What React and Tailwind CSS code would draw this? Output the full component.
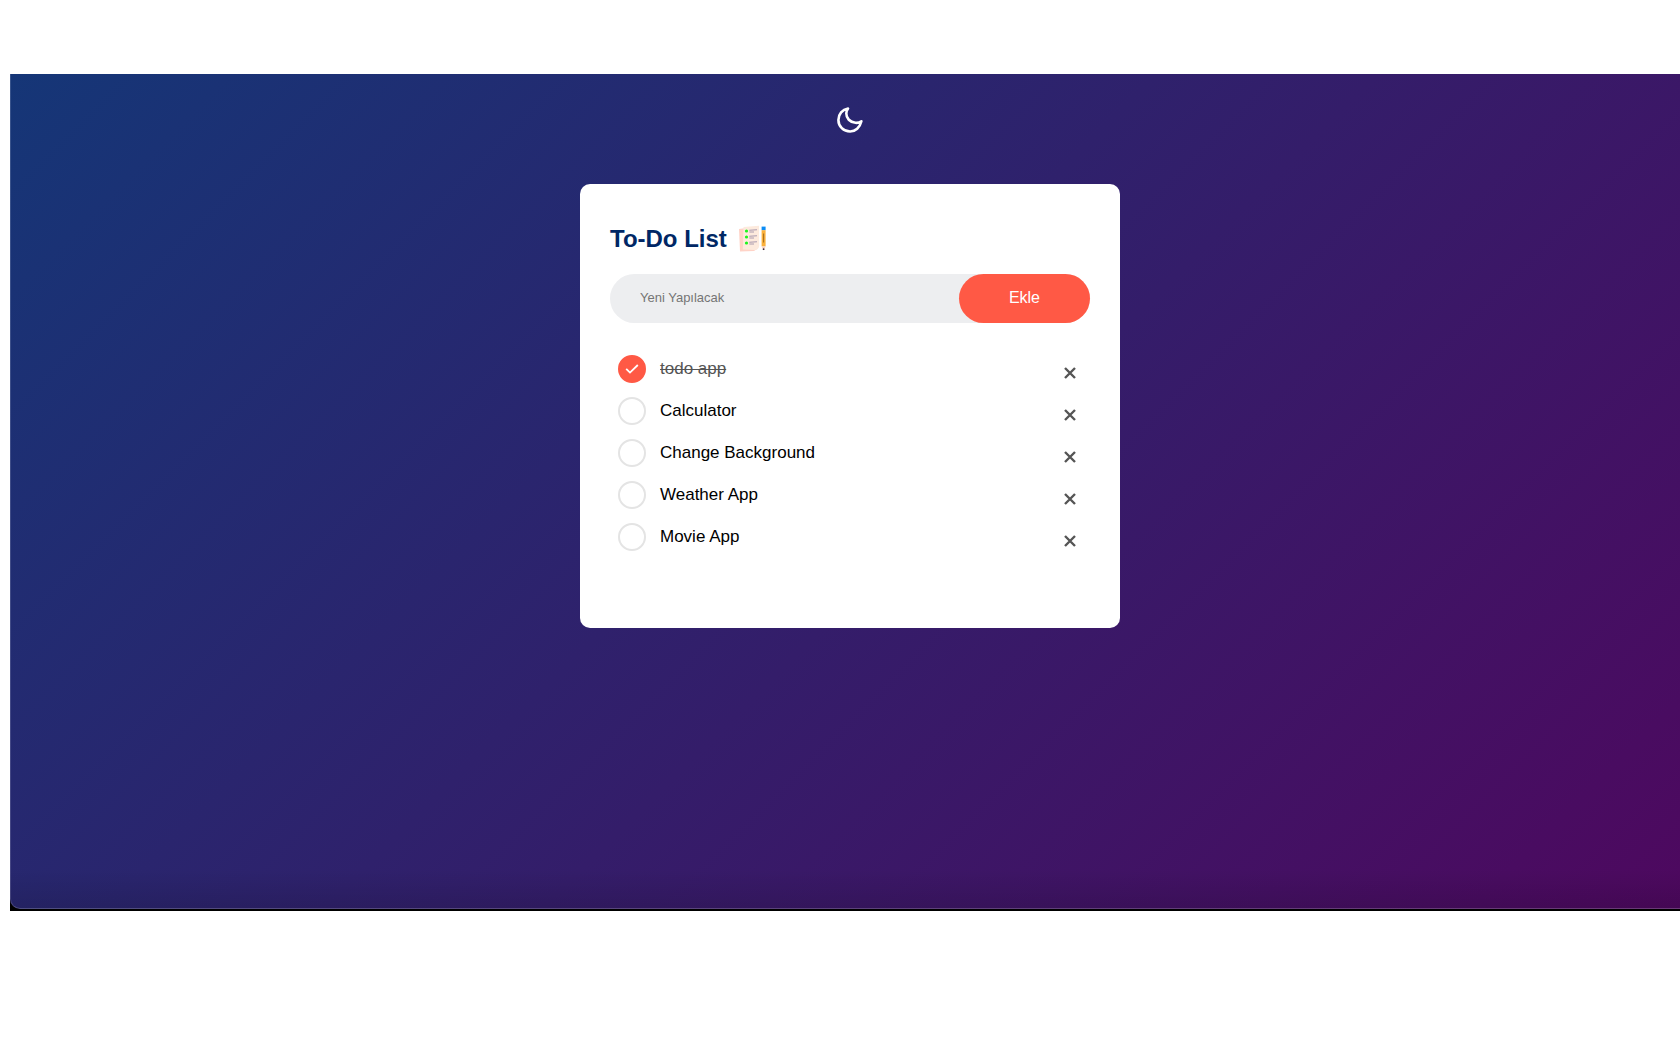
import { useState } from "react";

const INITIAL_TASKS = [
  { id: 1, text: "todo app", done: true },
  { id: 2, text: "Calculator", done: false },
  { id: 3, text: "Change Background", done: false },
  { id: 4, text: "Weather App", done: false },
  { id: 5, text: "Movie App", done: false },
];

function MoonIcon() {
  return (
    <svg viewBox="0 0 26 26" className="size-[26px]" fill="none" stroke="white" strokeWidth="2.6" strokeLinejoin="round" aria-hidden="true">
      <path d="M11 1.6 C5.4 2.4 1.4 7 1.4 12.9 C1.4 19.4 6.6 24.5 13.1 24.5 C18.4 24.5 22.9 20.4 24.4 14.2 C22.6 15.5 20.6 16 18.5 15.8 C13 15.4 9.2 11.2 9.3 6.4 C9.3 4.6 9.9 2.9 11 1.6Z" />
    </svg>
  );
}

function ListIcon() {
  return (
    <svg viewBox="0 0 30 30" className="size-[30px]" aria-hidden="true">
      <path d="M2 5 L17 3 L20 25 L17 27 L3 27.5Z" fill="#ffd3c7" />
      <path d="M6.5 3 L22 1.8 L22.2 22 Q21.4 26 18 26 L5.8 25.5Z" fill="#fdeadd" />
      {[7, 13, 19].map((y) => (
        <g key={y}>
          <circle cx="9.5" cy={y} r="1.6" fill="#1cf51c" />
          <path d={`M12.3 ${y - 0.8}L20 ${y - 1.2}M12.3 ${y + 1}H17`} stroke="#ab9bb0" strokeWidth="1.1" />
        </g>
      ))}
      <path d="M24.6 2.6h4v3.6h-4z" fill="#0b8cf5" />
      <path d="M24.6 6.2h4v16.2h-4z" fill="#fbb13c" />
      <path d="M26.6 9.5v9" stroke="#99651c" strokeWidth="0.9" />
      <path d="M24.6 22.4h4l-2 4.2z" fill="#f8d0c4" />
      <circle cx="26.6" cy="25.2" r="0.9" fill="#403040" />
    </svg>
  );
}

function TaskRow({ task, onToggle, onRemove }) {
  return (
    <li className="flex h-[42px] items-center pl-2">
      <label className="flex flex-1 cursor-pointer items-center gap-3.5">
        <input type="checkbox" checked={task.done} onChange={onToggle} className="peer sr-only" />
        <span className="grid size-7 place-items-center rounded-full border-2 border-[#e4e4e4] text-transparent peer-checked:border-[#ff5945] peer-checked:bg-[#ff5945] peer-checked:text-white">
          <svg viewBox="0 0 14 10" className="h-2.5 w-3.5" fill="none" stroke="currentColor" strokeWidth="1.8" aria-hidden="true">
            <path d="M1.2 4.8L5 8.6L12.8 1" />
          </svg>
        </span>
        <span className="text-[17px] leading-5 peer-checked:text-[#555] peer-checked:line-through peer-checked:decoration-1">{task.text}</span>
      </label>
      <button type="button" aria-label={`${task.text} sil`} onClick={onRemove} className="flex size-10 cursor-pointer items-end justify-center pb-2.5 text-[#555]">
        <svg viewBox="0 0 12 12" className="size-3" fill="none" stroke="currentColor" strokeWidth="2.4" aria-hidden="true">
          <path d="M1 1L11 11M11 1L1 11" />
        </svg>
      </button>
    </li>
  );
}

export default function App() {
  const [tasks, setTasks] = useState(INITIAL_TASKS);
  const [draft, setDraft] = useState("");

  const addTask = (event) => {
    event.preventDefault();
    if (!draft.trim()) return;
    setTasks([...tasks, { id: Date.now(), text: draft.trim(), done: false }]);
    setDraft("");
  };

  const toggleTask = (id) => setTasks(tasks.map((t) => (t.id === id ? { ...t, done: !t.done } : t)));

  return (
    <div className="overflow-x-hidden bg-white pt-[74px] font-['Liberation_Sans',Arial,sans-serif]">
      <div className="ml-2.5 w-full bg-black pb-0.5">
        <main className="flex min-h-[835px] flex-col items-center rounded-bl-[10px] border-x border-b border-x-white/15 border-b-white/20 bg-[linear-gradient(to_top,rgba(0,0,0,0.12),transparent_40px),linear-gradient(135deg,#153677,#4e085f)] bg-origin-border px-4 pt-8">
          <button type="button" aria-label="Tema" className="cursor-pointer p-px">
            <MoonIcon />
          </button>
          <section className="mt-[50px] w-full max-w-[540px] rounded-[10px] bg-white px-[30px] pt-10 pb-[70px]">
            <h1 className="flex items-center gap-2.5 text-2xl leading-[30px] font-bold text-[#002765]">
              To-Do List <ListIcon />
            </h1>
            <form onSubmit={addTask} className="mt-5 mb-[25px] flex rounded-[30px] bg-[#edeef0] pl-5">
              <input
                type="text"
                aria-label="Yeni Yapılacak"
                placeholder="Yeni Yapılacak"
                value={draft}
                onChange={(event) => setDraft(event.target.value)}
                className="min-w-0 flex-1 bg-transparent px-2.5 pt-2 pb-2.5 text-[13px] outline-none placeholder:text-[#757575]"
              />
              <button type="submit" className="cursor-pointer rounded-[40px] bg-[#ff5945] px-[50px] pt-[11px] pb-[13px] text-base leading-[25px] text-white">
                Ekle
              </button>
            </form>
            <ul>
              {tasks.map((task) => (
                <TaskRow key={task.id} task={task} onToggle={() => toggleTask(task.id)} onRemove={() => setTasks(tasks.filter((t) => t.id !== task.id))} />
              ))}
            </ul>
          </section>
        </main>
      </div>
    </div>
  );
}
